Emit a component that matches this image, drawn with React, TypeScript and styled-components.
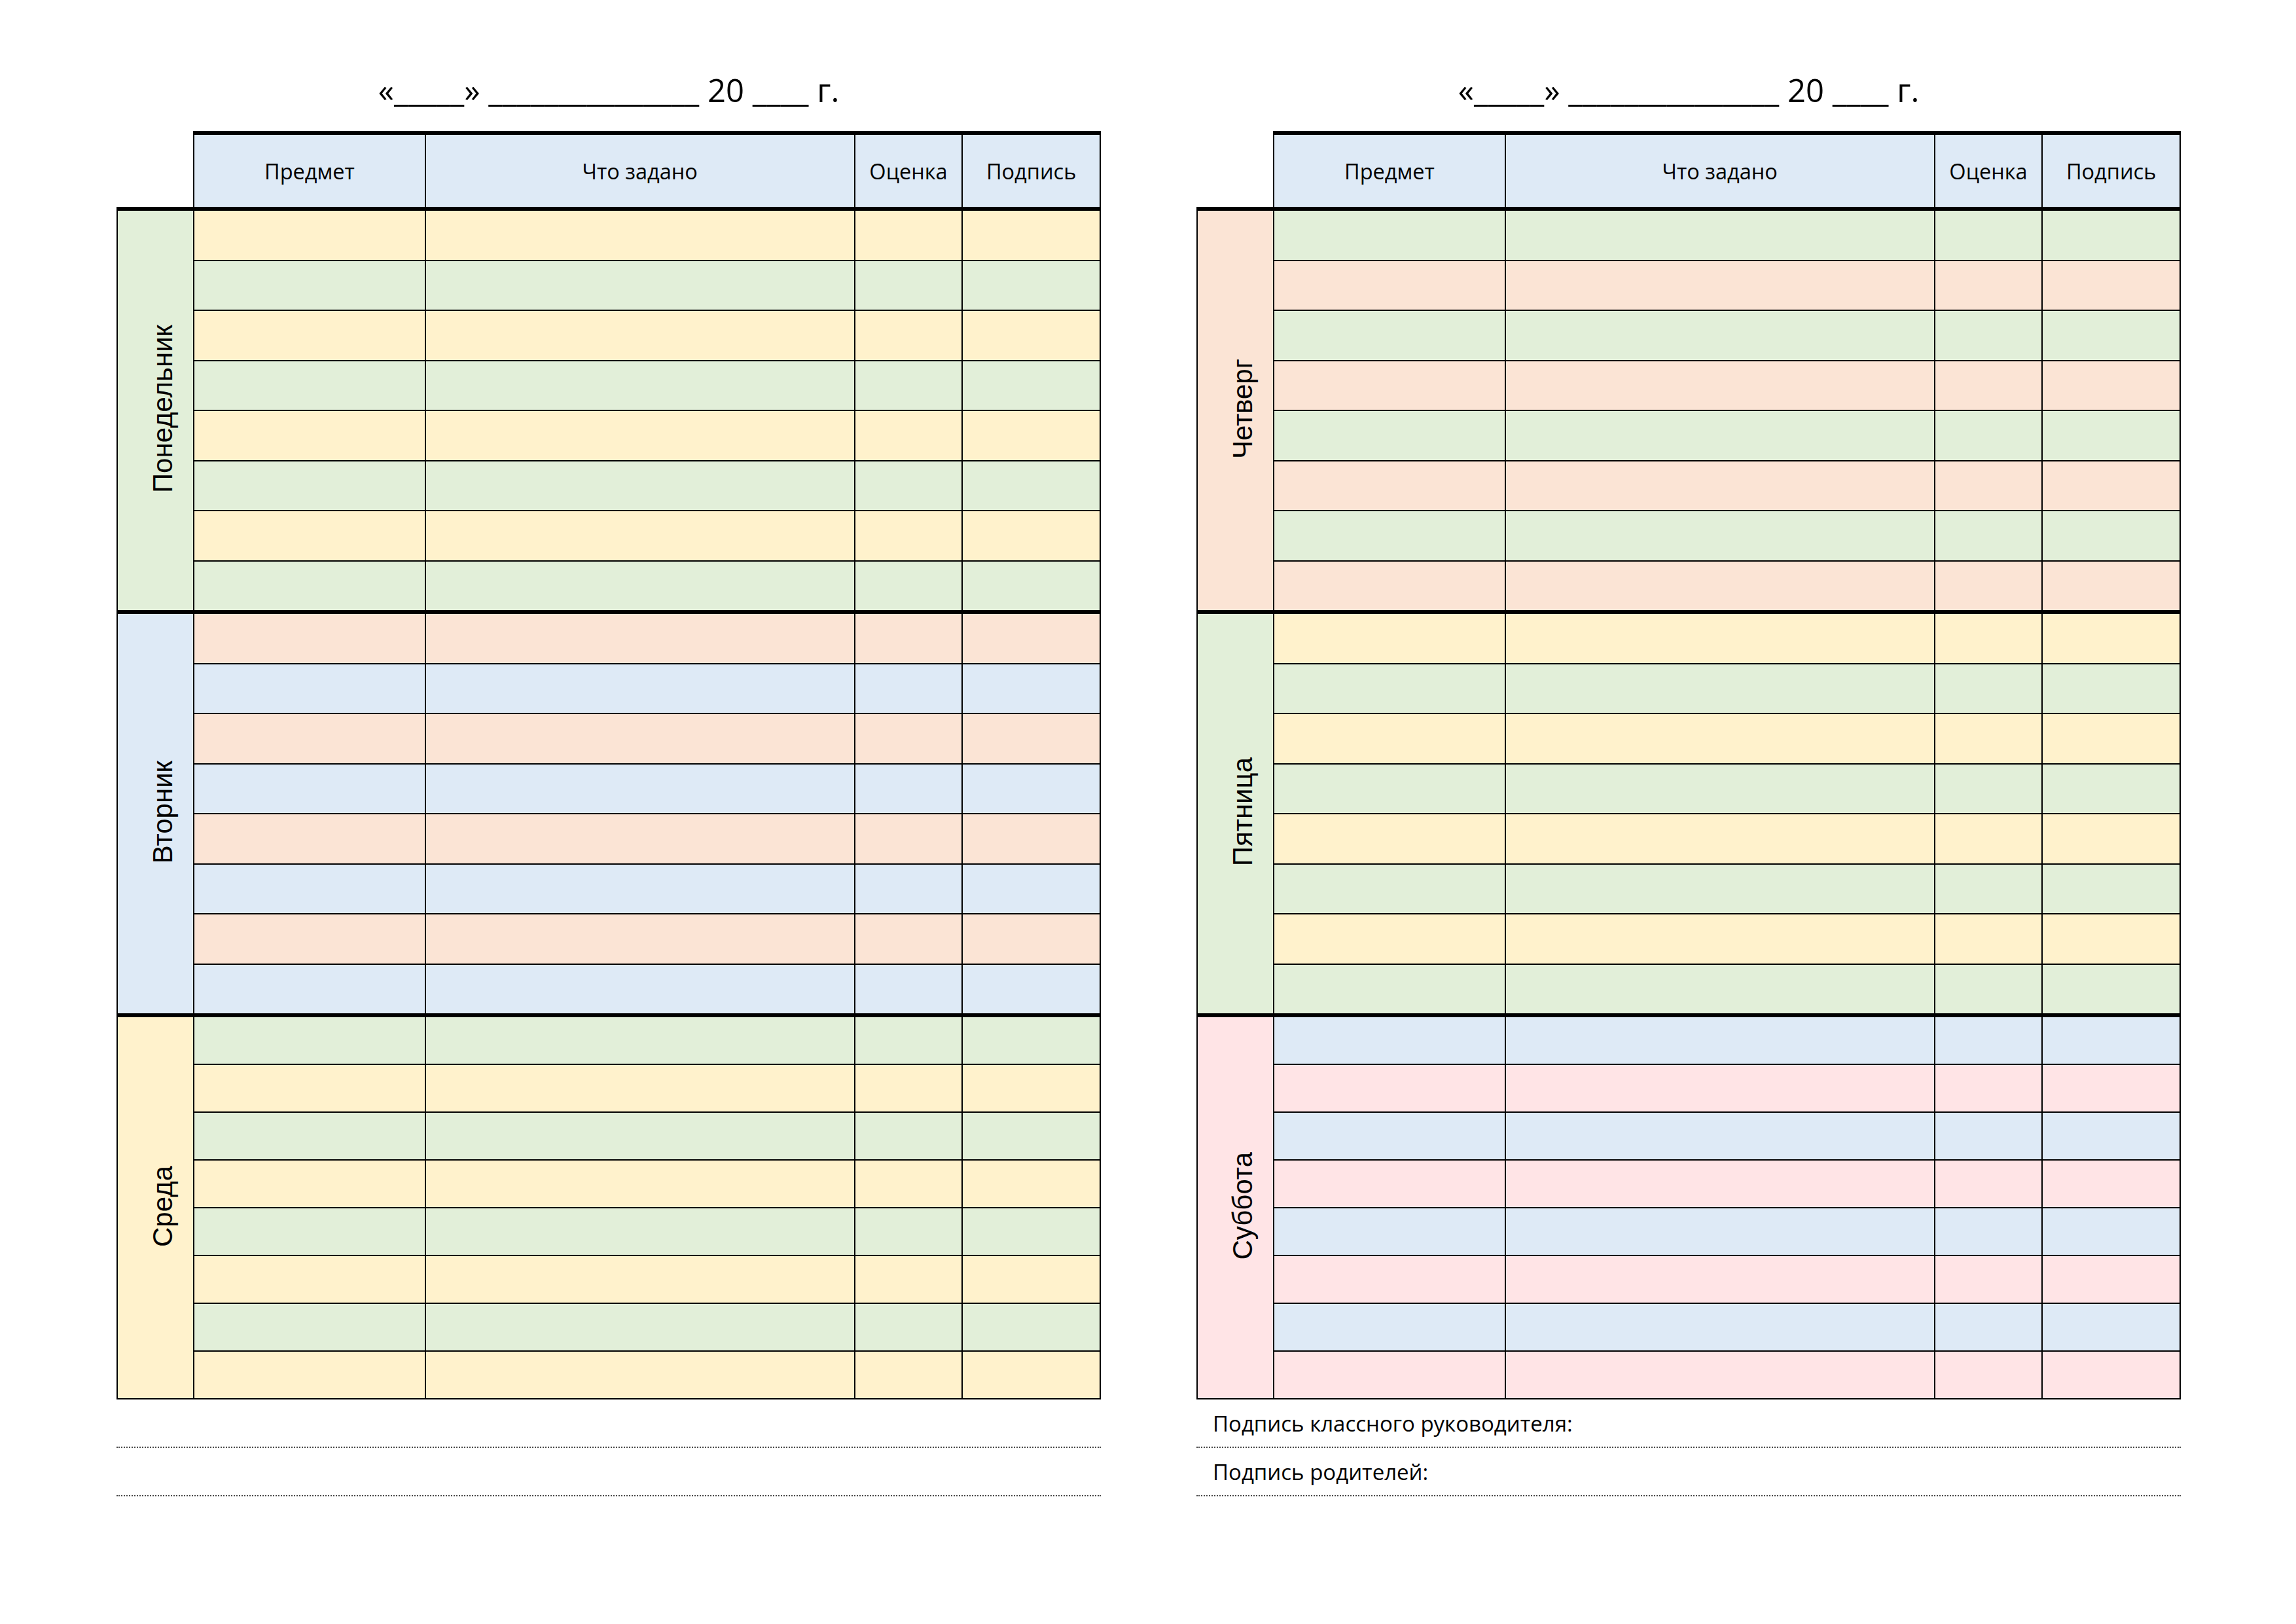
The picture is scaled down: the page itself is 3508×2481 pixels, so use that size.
import React from "react";
import styled, { createGlobalStyle } from "styled-components";

type Tone = "blue" | "green" | "yellow" | "peach" | "pink";

const tones: Record<Tone, string> = {
  blue: "#deeaf6",
  green: "#e2efd9",
  yellow: "#fff2cc",
  peach: "#fbe4d5",
  pink: "#ffe4e6",
};

type Day = {
  name: string;
  tone: Tone;
  rows: [Tone, Tone];
  rowHeight: number;
};

const leftDays: Day[] = [
  { name: "Понедельник", tone: "green", rows: ["yellow", "green"], rowHeight: 74.5 },
  { name: "Вторник", tone: "blue", rows: ["peach", "blue"], rowHeight: 74.5 },
  { name: "Среда", tone: "yellow", rows: ["green", "yellow"], rowHeight: 71 },
];

const rightDays: Day[] = [
  { name: "Четверг", tone: "peach", rows: ["green", "peach"], rowHeight: 74.5 },
  { name: "Пятница", tone: "green", rows: ["yellow", "green"], rowHeight: 74.5 },
  { name: "Суббота", tone: "pink", rows: ["blue", "pink"], rowHeight: 71 },
];

// content widths; the collapsed borders add a few px to each column
const DAY_COL = 116;
const columns = [
  { title: "Предмет", width: 350 },
  { title: "Что задано", width: 652 },
  { title: "Оценка", width: 162 },
  { title: "Подпись", width: 208 },
];

const SHEET_W = 1504;
const LESSONS = 8;

const GlobalStyle = createGlobalStyle`
  html, body {
    margin: 0;
    padding: 0;
    background: #ffffff;
  }
  body {
    font-family: "Open Sans", "Noto Sans", sans-serif;
    color: #000000;
  }
`;

const Page = styled.div`
  width: 3508px;
  height: 2481px;
  box-sizing: border-box;
  padding: 100px 0 0 178px;
  display: flex;
  align-items: flex-start;
  gap: 146px;
`;

const Sheet = styled.section`
  width: ${SHEET_W}px;
  flex: none;
  display: flex;
  flex-direction: column;
`;

const DateLine = styled.div`
  height: 74px;
  line-height: 74px;
  margin-bottom: 26px;
  text-align: center;
  font-size: 49px;
  white-space: pre;
`;

const Diary = styled.table`
  width: ${SHEET_W}px;
  table-layout: fixed;
  border-collapse: collapse;
`;

const Corner = styled.th`
  width: ${DAY_COL}px;
  padding: 0;
  border: none;
  border-bottom: 6px solid #000;
`;

const HeadCell = styled.th<{ $w: number }>`
  width: ${({ $w }) => $w}px;
  height: 110px;
  padding: 0;
  background: ${tones.blue};
  border: 2px solid #000;
  border-top: 6px solid #000;
  border-bottom: 6px solid #000;
  font-weight: 400;
  font-size: 32.5px;
  text-align: center;
  vertical-align: middle;
`;

const DayCell = styled.td<{ $tone: Tone }>`
  padding: 0 0 0 22px;
  background: ${({ $tone }) => tones[$tone]};
  border: 2px solid #000;
  border-top: 6px solid #000;
  text-align: center;
  vertical-align: middle;
`;

const DayName = styled.span`
  display: inline-block;
  writing-mode: vertical-rl;
  transform: rotate(180deg);
  font-family: "Liberation Sans", Arial, sans-serif;
  font-size: 42px;
  line-height: 1.15;
`;

const Cell = styled.td<{ $tone: Tone; $h: number; $first: boolean }>`
  height: ${({ $h }) => $h}px;
  padding: 0;
  background: ${({ $tone }) => tones[$tone]};
  border: 2px solid #000;
  border-top: ${({ $first }) => ($first ? "6px solid #000" : "2px solid #1c1c1c")};
`;

const NoteLine = styled.div`
  height: 72px;
  box-sizing: content-box;
  border-bottom: 2px dotted #4a4a4a;
  padding-left: 25px;
  display: flex;
  align-items: center;
  font-size: 33px;
`;

function DayBlock({ day }: { day: Day }) {
  return (
    <>
      {Array.from({ length: LESSONS }, (_, i) => (
        <tr key={i}>
          {i === 0 && (
            <DayCell rowSpan={LESSONS} $tone={day.tone}>
              <DayName>{day.name}</DayName>
            </DayCell>
          )}
          {columns.map((col) => (
            <Cell
              key={col.title}
              $tone={day.rows[i % 2]}
              $h={day.rowHeight}
              $first={i === 0}
            />
          ))}
        </tr>
      ))}
    </>
  );
}

function WeekSheet({ days, notes }: { days: Day[]; notes: string[] }) {
  return (
    <Sheet>
      <DateLine>«_____» _______________ 20 ____ г.</DateLine>
      <Diary>
        <thead>
          <tr>
            <Corner />
            {columns.map((col) => (
              <HeadCell key={col.title} $w={col.width}>
                {col.title}
              </HeadCell>
            ))}
          </tr>
        </thead>
        <tbody>
          {days.map((day) => (
            <DayBlock key={day.name} day={day} />
          ))}
        </tbody>
      </Diary>
      {notes.map((note, i) => (
        <NoteLine key={i}>{note}</NoteLine>
      ))}
    </Sheet>
  );
}

export default function App() {
  return (
    <>
      <GlobalStyle />
      <Page>
        <WeekSheet days={leftDays} notes={["", ""]} />
        <WeekSheet
          days={rightDays}
          notes={["Подпись классного руководителя:", "Подпись родителей:"]}
        />
      </Page>
    </>
  );
}
